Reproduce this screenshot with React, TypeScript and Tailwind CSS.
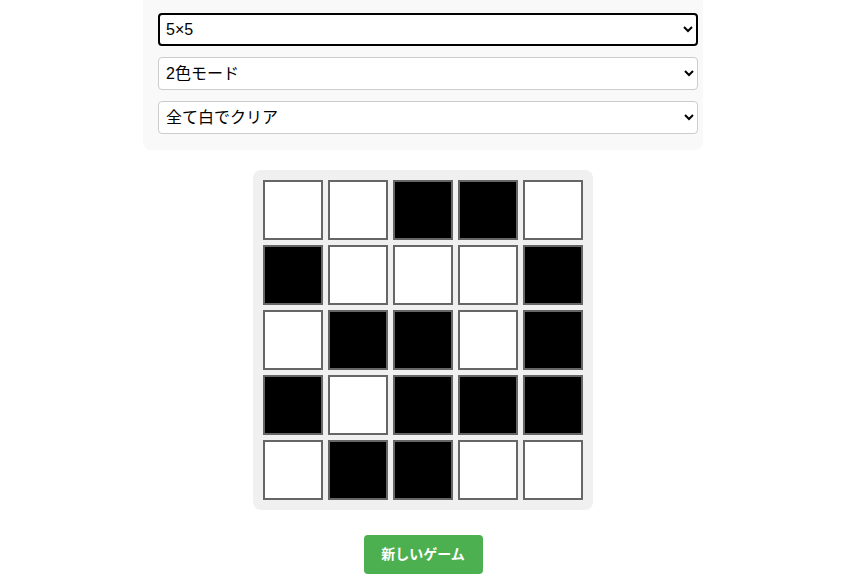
import { useState } from "react";

const initial = [
  [0, 0, 1, 1, 0],
  [1, 0, 0, 0, 1],
  [0, 1, 1, 0, 1],
  [1, 0, 1, 1, 1],
  [0, 1, 1, 0, 0],
];

export default function App() {
  const [board, setBoard] = useState<number[][]>(initial);

  const toggle = (r: number, c: number) => {
    setBoard((prev) =>
      prev.map((row, i) => row.map((v, j) => (i === r && j === c ? 1 - v : v)))
    );
  };

  return (
    <div
      className="min-h-screen bg-white flex flex-col items-center pr-px"
      style={{ fontFamily: '"Liberation Sans", "Noto Sans CJK JP", sans-serif' }}
    >
      {/* 設定パネル */}
      <div className="w-[560px] bg-[#f9f9f9] rounded-b-lg pl-[15px] pt-[13px] pb-[16px] flex flex-col gap-[11px]">
        <select className="h-[33px] w-[540px] bg-white border-2 border-black rounded-[4px] pl-[2px] pr-[1px] text-[16px] text-black">
          <option>5×5</option>
        </select>
        <select className="h-[33px] w-[540px] bg-white border border-[#ccc] rounded-[4px] pl-[3px] pr-[2px] text-[16px] text-black">
          <option>2色モード</option>
        </select>
        <select className="h-[33px] w-[540px] bg-white border border-[#ccc] rounded-[4px] pl-[3px] pr-[2px] text-[16px] text-black">
          <option>全て白でクリア</option>
        </select>
      </div>

      {/* 盤面 */}
      <div className="mt-[20px] bg-[#f0f0f0] rounded-lg p-[10px] grid grid-cols-5 gap-[5px]">
        {board.map((row, r) =>
          row.map((v, c) => (
            <button
              key={`${r}-${c}`}
              onClick={() => toggle(r, c)}
              className={`w-[60px] h-[60px] border-2 border-[#666] ${v ? "bg-black" : "bg-white"}`}
            />
          ))
        )}
      </div>

      <button className="mt-[25px] w-[119px] h-[39px] bg-[#4caf50] text-white text-[14px] font-semibold rounded-[4px]">
        新しいゲーム
      </button>
    </div>
  );
}
